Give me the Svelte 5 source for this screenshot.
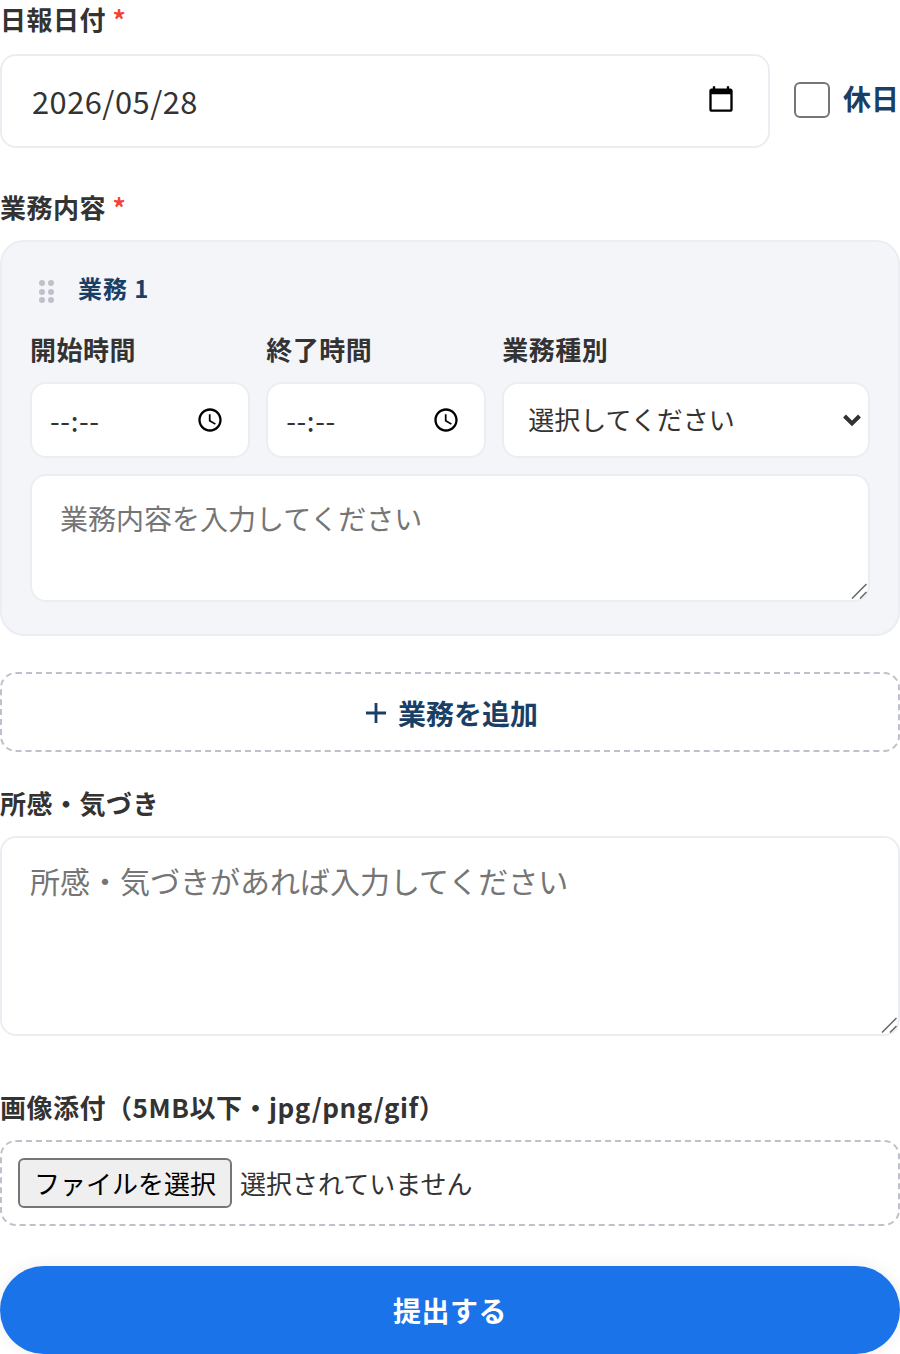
<script lang="ts">
	let holiday = $state(false);
	let date = $state('2026/05/28');
	let startTime = $state('--:--');
	let endTime = $state('--:--');
	const dots = [0, 1, 2, 3, 4, 5];
</script>

{#snippet clockIcon()}
	<svg class="field_icon clock_icon" viewBox="0 0 24 24" aria-hidden="true">
		<path
			d="M11.99 2C6.47 2 2 6.48 2 12s4.47 10 9.99 10C17.52 22 22 17.52 22 12S17.52 2 11.99 2zM12 20c-4.42 0-8-3.58-8-8s3.58-8 8-8 8 3.58 8 8-3.58 8-8 8zm.5-13H11v6l5.25 3.15.75-1.23-4.5-2.67z"
		/>
	</svg>
{/snippet}

{#snippet resizeGrip()}
	<svg class="resize_grip" viewBox="0 0 16 16" aria-hidden="true">
		<path d="M1 15.5 15.5 1M9 15.5 15.5 9" fill="none" stroke="#666" stroke-width="1.5" />
	</svg>
{/snippet}

<form class="report_form" onsubmit={(e) => e.preventDefault()}>
	<label class="field_label date_label" for="report-date">日報日付 <span class="required">*</span></label>
	<div class="date_row">
		<div class="control_wrap date_wrap">
			<input id="report-date" class="control date_input" type="text" bind:value={date} />
			<svg class="field_icon calendar_icon" viewBox="0 0 24 24" aria-hidden="true">
				<path
					d="M20 3h-1V1h-2v2H7V1H5v2H4c-1.1 0-2 .9-2 2v16c0 1.1.9 2 2 2h16c1.1 0 2-.9 2-2V5c0-1.1-.9-2-2-2zm0 18H4V8h16v13z"
				/>
			</svg>
		</div>
		<label class="holiday">
			<input class="holiday_check" type="checkbox" bind:checked={holiday} />
			<span class="holiday_text">休日</span>
		</label>
	</div>

	<div class="field_label section_label">業務内容 <span class="required">*</span></div>
	<section class="task_card">
		<div class="task_head">
			<span class="drag_handle">
				{#each dots as dot (dot)}
					<i></i>
				{/each}
			</span>
			<span class="task_title">業務 1</span>
		</div>
		<div class="task_grid">
			<div class="task_cell">
				<label class="field_label" for="start-time">開始時間</label>
				<div class="control_wrap">
					<input id="start-time" class="control time_input" type="text" bind:value={startTime} />
					{@render clockIcon()}
				</div>
			</div>
			<div class="task_cell">
				<label class="field_label" for="end-time">終了時間</label>
				<div class="control_wrap">
					<input id="end-time" class="control time_input" type="text" bind:value={endTime} />
					{@render clockIcon()}
				</div>
			</div>
			<div class="task_cell">
				<label class="field_label" for="task-type">業務種別</label>
				<div class="control_wrap">
					<select id="task-type" class="control type_select">
						<option>選択してください</option>
					</select>
					<svg class="select_arrow" viewBox="0 0 20 14" aria-hidden="true">
						<path d="M2.5 3 10 10.5 17.5 3" fill="none" stroke="#333" stroke-width="4" />
					</svg>
				</div>
			</div>
		</div>
		<div class="control_wrap">
			<textarea class="control task_text" placeholder="業務内容を入力してください"></textarea>
			{@render resizeGrip()}
		</div>
	</section>

	<button class="add_button" type="button">
		<svg viewBox="0 0 20 20" width="20" height="20" aria-hidden="true">
			<path d="M10 0v20M0 10h20" fill="none" stroke="currentColor" stroke-width="2.8" />
		</svg>
		業務を追加
	</button>

	<label class="field_label notes_label" for="notes">所感・気づき</label>
	<div class="control_wrap notes_wrap">
		<textarea id="notes" class="control notes_text" placeholder="所感・気づきがあれば入力してください"></textarea>
		{@render resizeGrip()}
	</div>

	<label class="field_label image_label" for="image">画像添付（5MB以下・jpg/png/gif）</label>
	<div class="file_box">
		<button class="file_button" type="button">ファイルを選択</button>
		<span class="file_name">選択されていません</span>
	</div>

	<button class="submit_button" type="submit">提出する</button>
</form>

<style>
	:global(body) {
		background: #fff;
	}

	.report_form {
		display: flex;
		flex-direction: column;
		font-family: 'Noto Sans CJK JP', 'Noto Sans', sans-serif;
		color: #333;
	}

	.field_label {
		display: block;
		font-size: 26px;
		line-height: 39px;
		font-weight: 700;
		letter-spacing: 0.52px;
		color: #333;
	}

	.date_label {
		margin-top: -1px;
	}

	.required {
		color: #f44336;
	}

	.control_wrap {
		position: relative;
	}

	.control {
		box-sizing: border-box;
		border: 2px solid #ecedf2;
		border-radius: 16px;
		background: #fff;
		font-family: inherit;
		color: #333;
		outline: none;
	}

	.field_icon {
		position: absolute;
		width: 28px;
		height: 28px;
		fill: #000;
	}

	.calendar_icon {
		top: 31px;
		right: 35px;
	}

	.clock_icon {
		top: 24px;
		right: 26px;
	}

	.select_arrow {
		position: absolute;
		top: 31px;
		right: 8px;
		width: 20px;
		height: 14px;
	}

	.resize_grip {
		position: absolute;
		right: 3px;
		bottom: 3px;
		width: 16px;
		height: 16px;
	}

	.date_row {
		display: flex;
		align-items: center;
		gap: 24px;
		margin-top: 16px;
	}

	.date_wrap {
		flex: 1;
		min-width: 0;
	}

	.date_input {
		display: block;
		width: 100%;
		height: 94px;
		padding: 0 30px 2px;
		font-size: 30.8px;
		letter-spacing: 0.5px;
	}

	.holiday {
		display: flex;
		align-items: center;
		gap: 13px;
		margin-bottom: 2px;
		padding-right: 1px;
		font-size: 28px;
		font-weight: 700;
		color: #1a3f66;
	}

	.holiday_text {
		margin-bottom: 4px;
	}

	.holiday_check {
		appearance: none;
		box-sizing: border-box;
		width: 36px;
		height: 36px;
		margin: 0;
		border: 2px solid #767676;
		border-radius: 6px;
		background: #fff;
	}

	.section_label {
		margin-top: 39px;
	}

	.task_card {
		box-sizing: border-box;
		display: flex;
		flex-direction: column;
		gap: 16px;
		margin-top: 14px;
		padding: 27px 28px 32px;
		border: 2px solid #ecedf2;
		border-radius: 24px;
		background: #f4f5f9;
	}

	.task_head {
		display: flex;
		align-items: center;
		gap: 24.5px;
		height: 36px;
		margin-bottom: 8px;
		padding-left: 9px;
	}

	.drag_handle {
		display: grid;
		grid-template-columns: 6px 6px;
		gap: 2.5px;
		margin-top: 9px;
	}

	.drag_handle i {
		width: 6px;
		height: 6px;
		border-radius: 50%;
		background: #c0c0cc;
	}

	.task_title {
		font-size: 24px;
		font-weight: 700;
		letter-spacing: 0.9px;
		color: #1a3f66;
	}

	.task_grid {
		display: grid;
		grid-template-columns: 1fr 1fr 1.67fr;
		gap: 16px;
	}

	.task_cell {
		display: flex;
		flex-direction: column;
		gap: 14px;
		min-width: 0;
	}

	.time_input {
		display: block;
		width: 100%;
		height: 76px;
		padding: 0 18px;
		font-size: 28px;
		letter-spacing: 0.6px;
	}

	.type_select {
		appearance: none;
		display: block;
		width: 100%;
		height: 76px;
		padding: 0 18px 4px 24px;
		font-size: 26px;
	}

	.task_text {
		display: block;
		width: 100%;
		height: 128px;
		padding: 22px 28px;
		font-size: 28px;
		resize: none;
	}

	.add_button {
		display: flex;
		align-items: center;
		justify-content: center;
		gap: 12px;
		height: 80px;
		margin-top: 36px;
		padding: 2px 0 0 4px;
		border: 2px dashed #c0c0cc;
		border-radius: 16px;
		background: #fff;
		font-family: inherit;
		font-size: 28px;
		font-weight: 700;
		color: #1a3f66;
	}

	.notes_label {
		margin-top: 31px;
	}

	.notes_wrap {
		margin-top: 14px;
	}

	.notes_text {
		display: block;
		width: 100%;
		height: 200px;
		padding: 20px 28px;
		font-size: 30px;
		resize: none;
	}

	.image_label {
		margin-top: 51px;
	}

	.file_box {
		box-sizing: border-box;
		display: flex;
		align-items: center;
		gap: 8px;
		height: 86px;
		margin-top: 14px;
		padding: 0 16px;
		border: 2px dashed #c0c0cc;
		border-radius: 16px;
		font-size: 26px;
	}

	.file_button {
		box-sizing: border-box;
		height: 50px;
		padding: 0 14px 2px;
		border: 2px solid #767676;
		border-radius: 6px;
		background: #efefef;
		font-family: inherit;
		font-size: 26px;
		color: #000;
	}

	.file_name {
		padding-bottom: 2px;
	}

	.submit_button {
		height: 88px;
		margin-top: 40px;
		border: none;
		border-radius: 44px;
		background: #1a73e8;
		box-shadow: 0 0 16px rgba(0, 0, 0, 0.08);
		font-family: inherit;
		font-size: 28px;
		font-weight: 600;
		letter-spacing: 0.5px;
		color: #fff;
	}
</style>
